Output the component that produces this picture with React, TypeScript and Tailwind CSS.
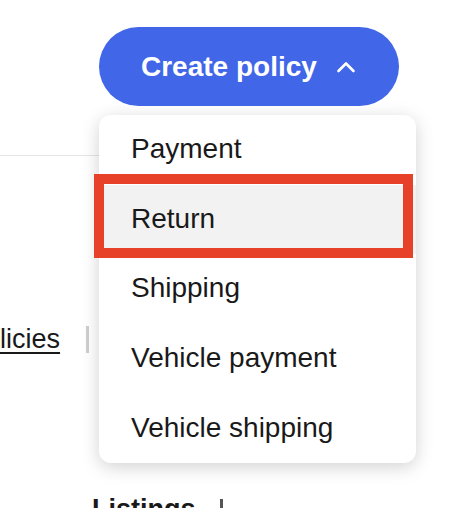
import { useState } from "react";

const policyTypes = ["Payment", "Return", "Shipping", "Vehicle payment", "Vehicle shipping"];

export default function App() {
  const [open] = useState(true);
  const hovered = "Return";

  return (
    <div className="relative h-[508px] w-[464px] overflow-hidden bg-white font-['Liberation_Sans',Arial,sans-serif] text-[#191919]">
      {/* header with the create button */}
      <div className="pl-[99px] pt-[27px]">
        <button className="flex h-[79px] w-[300px] items-center rounded-full bg-[#4166e8] pl-[42px] text-[28px] font-bold text-white">
          Create policy
          <svg width="20" height="12" viewBox="0 0 20 12" className="ml-[19px]" fill="none">
            <polyline points="2.5,10 10,2.5 17.5,10" stroke="white" strokeWidth="2.6" strokeLinecap="round" strokeLinejoin="round" />
          </svg>
        </button>
      </div>

      <div className="mt-[49px] h-px w-[120px] bg-[#e5e5e5]" />

      {/* page content behind the menu */}
      <div className="mt-[168px] flex h-[30px] items-center">
        <span className="-ml-[33px] text-[27px] leading-none text-[#191919] underline underline-offset-[4px]">Policies</span>
        <div className="ml-[26px] h-[27px] w-[3px] bg-[#cfcfcf]" />
      </div>

      <div className="mt-[142px] flex items-start pl-[92px]">
        <span className="text-[27px] font-bold leading-none">Listings</span>
        <div className="ml-[24px] mt-[3px] h-[27px] w-[3px] bg-[#555]" />
      </div>

      {/* dropdown menu */}
      {open && (
        <div className="absolute left-[99px] top-[115px] w-[317px] overflow-hidden rounded-xl bg-white shadow-[0_4px_18px_rgba(0,0,0,0.18)]">
          {policyTypes.map((p) => (
            <div
              key={p}
              className={`flex h-[69.6px] items-center pl-8 text-[28px] ${p === hovered ? "bg-[#f2f2f2]" : ""}`}
            >
              <span className="-mt-[1px]">{p}</span>
            </div>
          ))}
        </div>
      )}

      {/* annotation box */}
      <div className="absolute left-[94px] top-[174px] h-[84px] w-[319px] border-[10px] border-[#e8412a]" />
    </div>
  );
}
